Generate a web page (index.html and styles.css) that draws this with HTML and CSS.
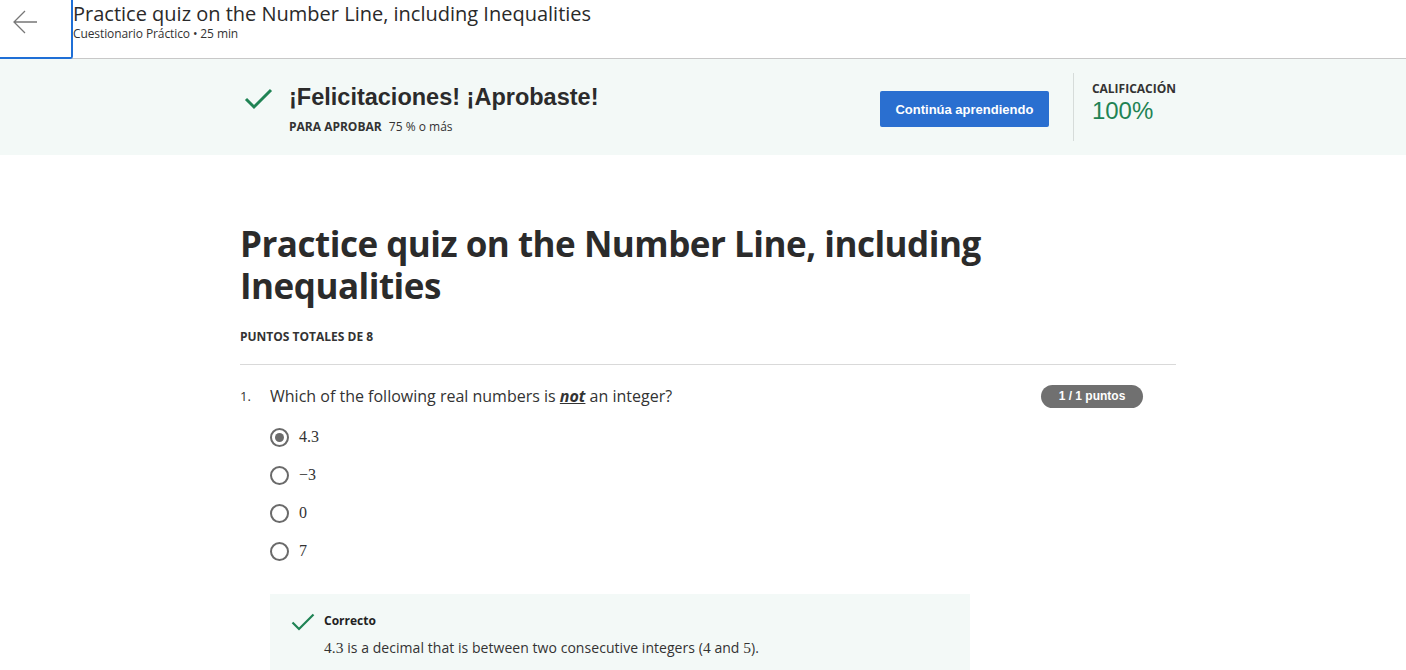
FILE: index.html
```html
<!DOCTYPE html>
<html lang="es">
<head>
<meta charset="utf-8">
<title>Practice quiz</title>
<link rel="stylesheet" href="styles.css">
</head>
<body>
<header class="topbar">
  <button class="back" aria-label="Volver">
    <svg width="26" height="24" viewBox="0 0 26 24"><path d="M25 12H2M13 1L2 12l11 11" fill="none" stroke="#777" stroke-width="1.3"/></svg>
  </button>
  <div class="top-titles">
    <div class="top-title">Practice quiz on the Number Line, including Inequalities</div>
    <div class="top-sub">Cuestionario Práctico • 25 min</div>
  </div>
</header>

<section class="banner">
  <div class="banner-inner">
    <svg class="bigcheck" width="29" height="22" viewBox="0 0 29 22"><path d="M2 11l8 8L27 2" fill="none" stroke="#1f8354" stroke-width="3"/></svg>
    <div class="banner-text">
      <div class="banner-title">¡Felicitaciones! ¡Aprobaste!</div>
      <div class="pass"><span class="pass-label">PARA APROBAR</span> 75 % o más</div>
    </div>
    <button class="cta">Continúa aprendiendo</button>
    <div class="divider"></div>
    <div class="grade">
      <div class="grade-label">CALIFICACIÓN</div>
      <div class="grade-value">100%</div>
    </div>
  </div>
</section>

<main class="content">
  <h1 class="quiz-title">Practice quiz on the Number Line, including Inequalities</h1>
  <div class="total">PUNTOS TOTALES DE 8</div>
  <hr class="rule">
  <div class="question">
    <div class="q-head">
      <span class="q-num">1.</span>
      <span class="q-text">Which of the following real numbers is <em class="not">not</em> an integer?</span>
      <span class="badge">1 / 1 puntos</span>
    </div>
    <ul class="options">
      <li class="opt"><span class="radio checked"></span><span class="math">4.3</span></li>
      <li class="opt"><span class="radio"></span><span class="math">−3</span></li>
      <li class="opt"><span class="radio"></span><span class="math">0</span></li>
      <li class="opt"><span class="radio"></span><span class="math">7</span></li>
    </ul>
    <div class="feedback">
      <svg class="smallcheck" width="24" height="19" viewBox="0 0 24 19"><path d="M1.5 9.5l6.5 6.5L22.5 1.5" fill="none" stroke="#1f8354" stroke-width="2.2"/></svg>
      <div>
        <div class="fb-title">Correcto</div>
        <div class="fb-text"><span class="math">4.3</span> is a decimal that is between two consecutive integers (<span class="math">4</span> and <span class="math">5</span>).</div>
      </div>
    </div>
  </div>
</main>
</body>
</html>
```

FILE: styles.css
```css
* { box-sizing: border-box; }
html, body { margin: 0; padding: 0; background: #fff; }
body { font-family: "Open Sans", "Liberation Sans", sans-serif; color: #1f1f1f; overflow: hidden; }

.topbar {
  display: flex;
  height: 59px;
  border-bottom: 1px solid #c8c8c8;
}
.back {
  width: 73px;
  height: 59px;
  margin: 0;
  background: #fff;
  border: none;
  border-right: 2px solid #1f6fd6;
  border-bottom: 2px solid #1f6fd6;
  border-radius: 0 0 3px 0;
  display: flex;
  align-items: flex-start;
  justify-content: flex-start;
  padding: 10px 0 0 12px;
}
.top-title { font-size: 20px; line-height: 27px; color: #2a2a2a; }
.top-sub { font-size: 12px; line-height: 14px; color: #333; letter-spacing: -0.1px; }

.banner { background: #f3f9f7; height: 96px; }
.banner-inner {
  width: 932px;
  margin-left: 244px;
  display: flex;
  align-items: flex-start;
  height: 96px;
}
.bigcheck { margin-top: 29px; flex: none; }
.banner-text { margin-left: 16px; padding-top: 23px; flex: 1; }
.banner-title {
  font-family: "Liberation Sans", Arial, sans-serif;
  font-weight: 700;
  font-size: 23.5px;
  line-height: 30px;
  color: #2b2b2b;
}
.pass { font-size: 12px; margin-top: 6px; color: #333; }
.pass-label { font-weight: 700; margin-right: 4px; }
.cta {
  margin-top: 32px;
  width: 169px;
  height: 36px;
  background: #2a6fd0;
  color: #fff;
  border: none;
  border-radius: 2px;
  font-family: "Liberation Sans", Arial, sans-serif;
  font-weight: 700;
  font-size: 13px;
  padding: 0;
}
.divider { width: 1px; background: #d6dcda; height: 68px; margin: 14px 18px 0 24px; }
.grade { padding-top: 22px; }
.grade-label { font-size: 12px; font-weight: 700; color: #333; line-height: 16px; }
.grade-value {
  font-family: "Liberation Sans", Arial, sans-serif;
  font-size: 24px;
  color: #1f8354;
  line-height: 28px;
}

.content { width: 936px; margin-left: 240px; padding-top: 68px; }
.quiz-title {
  margin: 0;
  font-size: 35px;
  line-height: 42px;
  font-weight: 700;
  color: #2b2b2b;
  width: 760px;
  letter-spacing: -0.5px;
}
.total { font-size: 12px; font-weight: 700; color: #333; margin-top: 21px; }
.rule { border: none; border-top: 1px solid #d9d9d9; margin: 19px 0 0 0; }

.question { padding-top: 19px; }
.q-head { display: flex; align-items: center; height: 24px; }
.q-num { width: 30px; font-size: 13px; color: #333; }
.q-text { flex: 1; font-size: 16px; color: #333; }
.not { font-weight: 700; text-decoration: underline; }
.badge {
  background: #707070;
  color: #fff;
  font-family: "Liberation Sans", Arial, sans-serif;
  font-weight: 700;
  font-size: 12px;
  border-radius: 12px;
  width: 102px;
  height: 23px;
  line-height: 23px;
  text-align: center;
  margin-right: 33px;
}
.options { list-style: none; margin: 10px 0 0 30px; padding: 0; }
.opt { display: flex; align-items: center; height: 38px; }
.radio {
  width: 19px; height: 19px;
  border: 2px solid #6a6a6a;
  border-radius: 50%;
  margin-right: 10px;
  display: flex; align-items: center; justify-content: center;
}
.radio.checked::after { content: ""; width: 9px; height: 9px; border-radius: 50%; background: #6a6a6a; }
.math { font-family: "Liberation Serif", "DejaVu Serif", serif; font-size: 16px; color: #333; }

.feedback {
  margin: 24px 0 0 30px;
  width: 700px;
  height: 80px;
  background: #f3f9f7;
  display: flex;
  align-items: flex-start;
  padding: 19px 0 0 21px;
}
.smallcheck { margin-right: 9px; flex: none; }
.fb-title { font-size: 12px; font-weight: 700; color: #222; line-height: 16px; }
.fb-text { font-size: 14px; color: #333; margin-top: 9px; letter-spacing: 0.05px; }
.fb-text .math { font-size: 15.5px; }
```
